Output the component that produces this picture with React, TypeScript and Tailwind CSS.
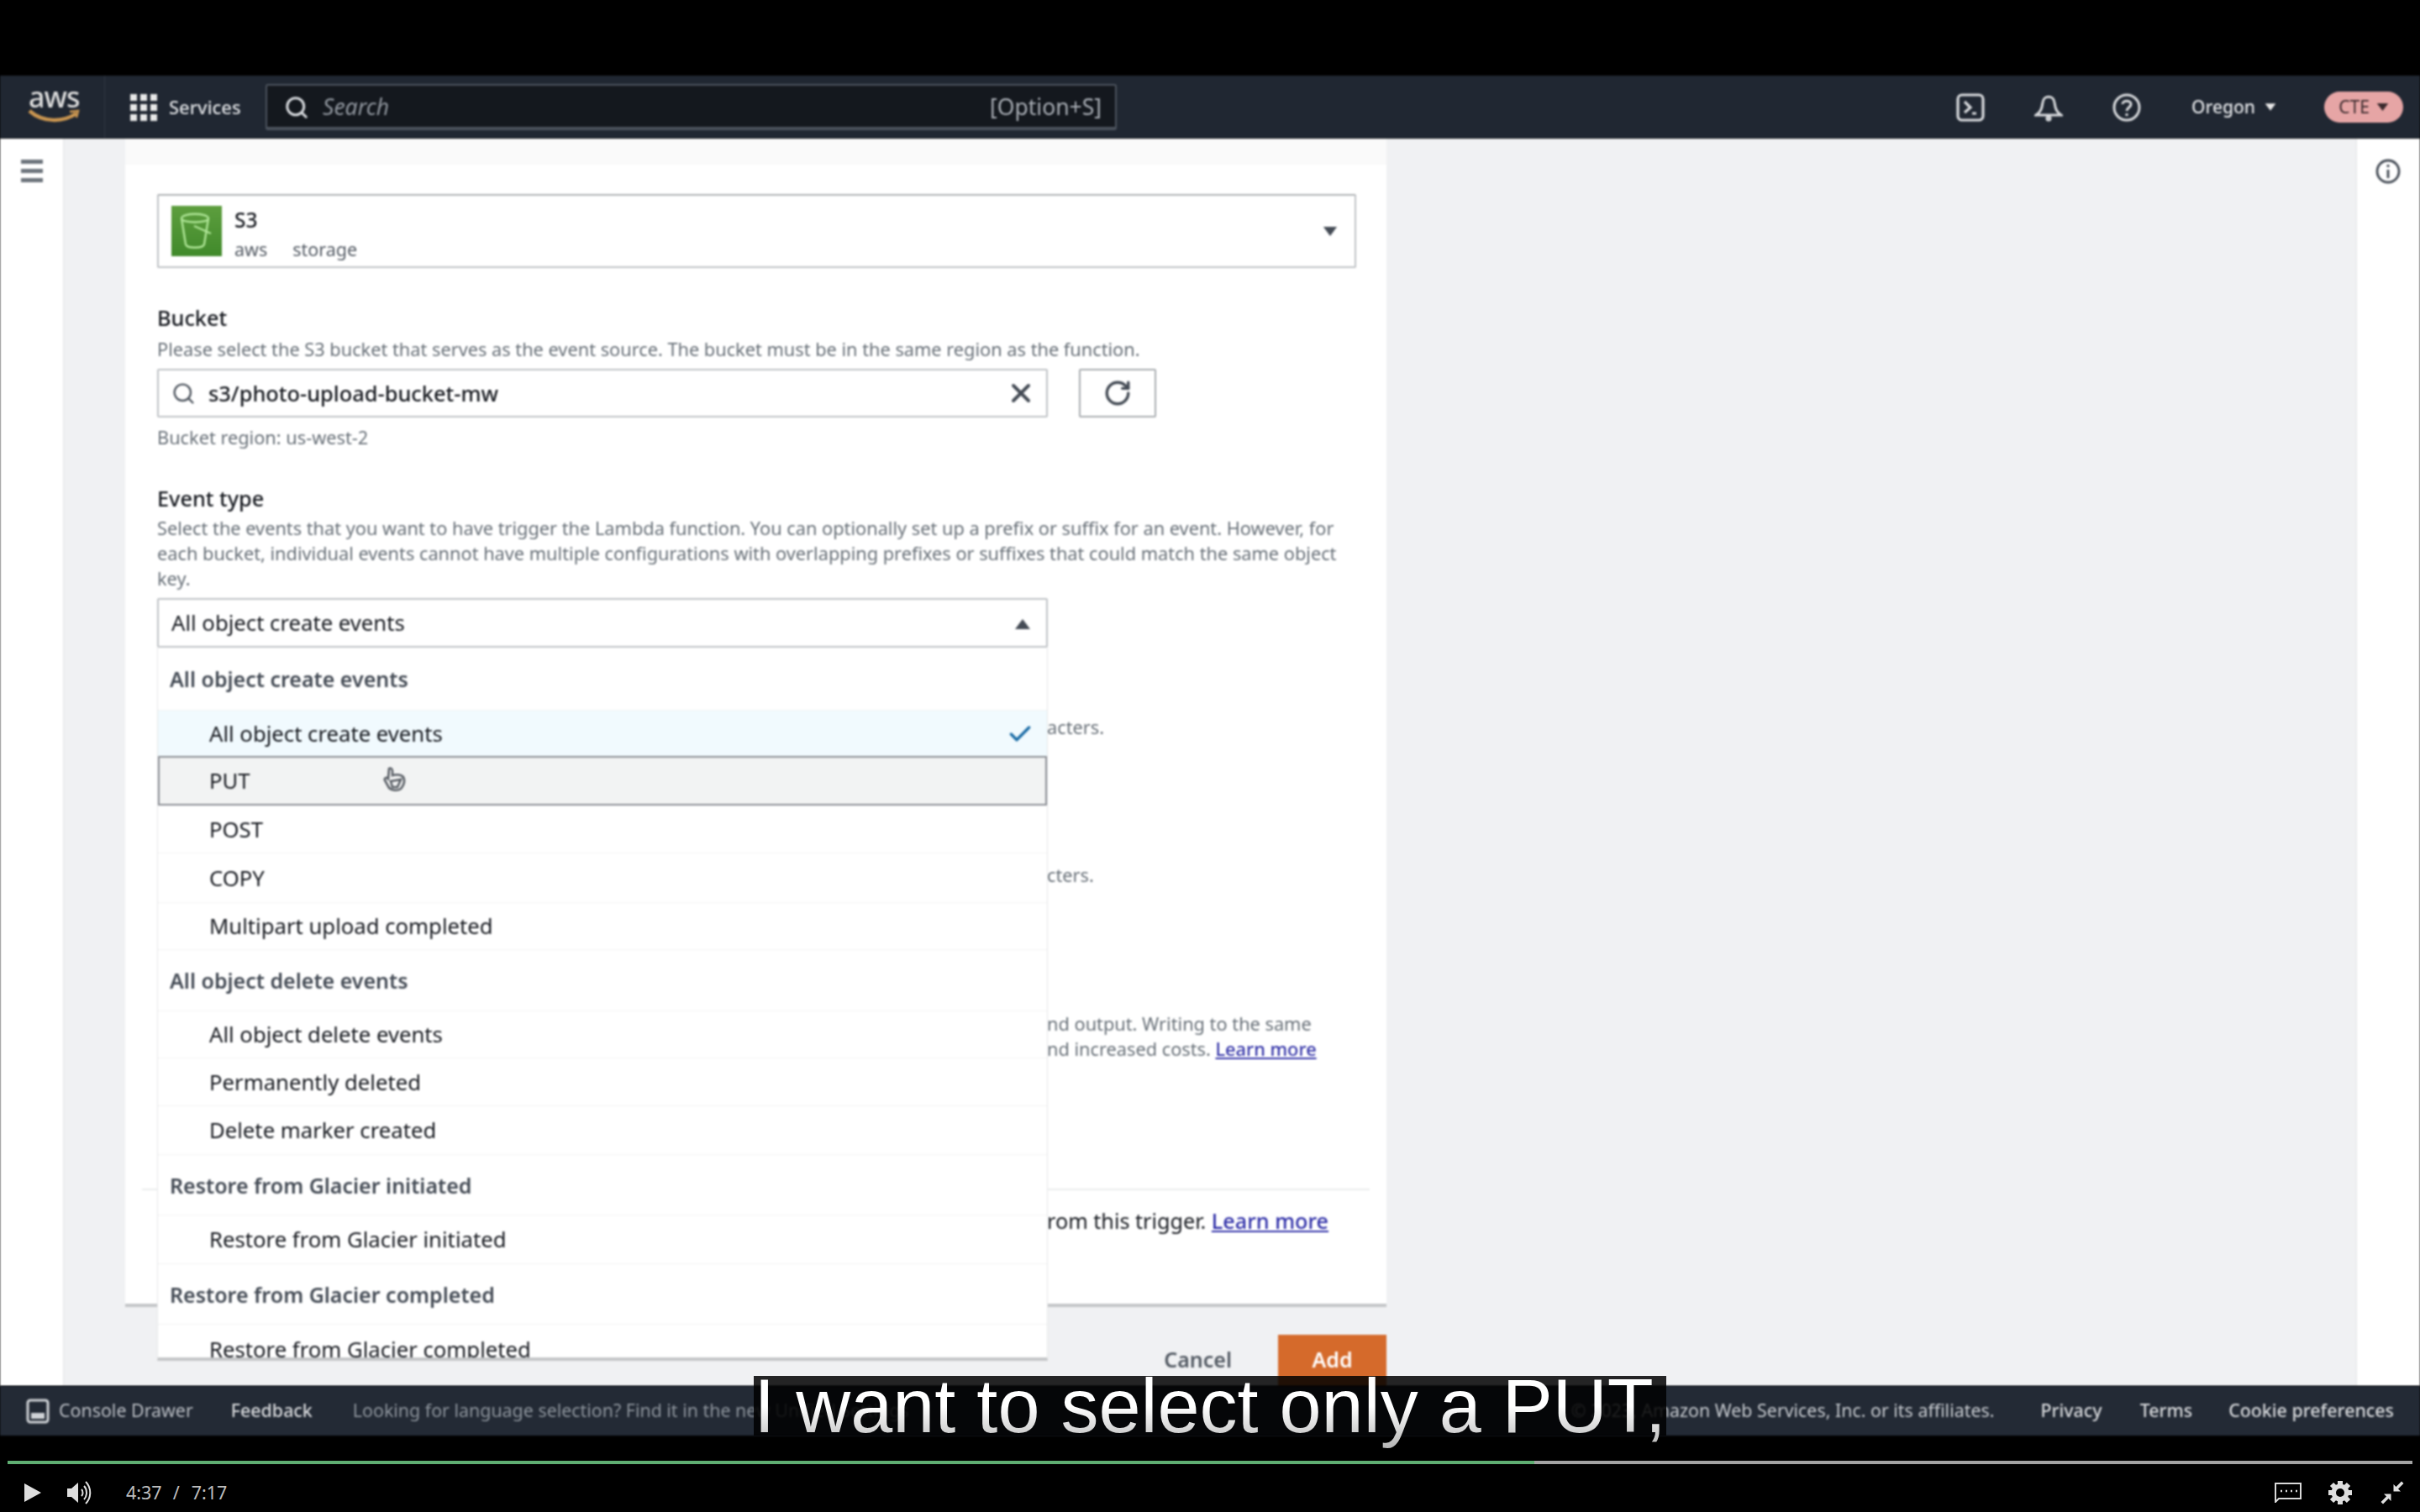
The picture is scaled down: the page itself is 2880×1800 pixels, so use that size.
import React from "react";
import { Search, X, RotateCw, Check } from "lucide-react";

const rows: { t: string; h: number; kind: "group" | "item" | "selected" | "hover" }[] = [
  { t: "All object create events", h: 75, kind: "group" },
  { t: "All object create events", h: 54, kind: "selected" },
  { t: "PUT", h: 59, kind: "hover" },
  { t: "POST", h: 57, kind: "item" },
  { t: "COPY", h: 59, kind: "item" },
  { t: "Multipart upload completed", h: 56, kind: "item" },
  { t: "All object delete events", h: 73, kind: "group" },
  { t: "All object delete events", h: 56, kind: "item" },
  { t: "Permanently deleted", h: 57, kind: "item" },
  { t: "Delete marker created", h: 58, kind: "item" },
  { t: "Restore from Glacier initiated", h: 72, kind: "group" },
  { t: "Restore from Glacier initiated", h: 58, kind: "item" },
  { t: "Restore from Glacier completed", h: 72, kind: "group" },
  { t: "Restore from Glacier completed", h: 60, kind: "item" },
];

function Row({ t, h, kind }: { t: string; h: number; kind: string }) {
  const base = "flex items-center shrink-0 w-full pt-[2px] ";
  const style = { height: h };
  if (kind === "group")
    return (
      <div style={style} className={base + "pl-[14px] font-semibold text-[25px] text-[#444b55] border-b border-[#f2f3f3]"}>
        {t}
      </div>
    );
  if (kind === "selected")
    return (
      <div style={style} className={base + "pl-[61px] pr-[16px] justify-between bg-[#f1fafe] text-[#16191f]"}>
        <span>{t}</span>
        <Check size={32} strokeWidth={2.6} className="text-[#1f6fa8]" />
      </div>
    );
  if (kind === "hover")
    return (
      <div style={style} className={base + "relative pl-[61px] bg-[#f2f3f3] border-2 border-[#8d9096] text-[#16191f]"}>
        <span className="-ml-[2px]">{t}</span>
        <svg width="28" height="30" viewBox="0 0 28 30" fill="none" stroke="#5a5f66" strokeWidth="2.6" className="absolute left-[265px] top-[11px]">
          <path d="M8 2 C10 1, 12 2, 12 5 V10 C16 9, 22 9, 25 12 C27 16, 26 21, 22 26 C18 29, 11 28, 8 25 L3 16 C2 13, 5 12, 7 14 Z" />
          <path d="M10 17 L22 15 L18 24 H12 Z" />
        </svg>
      </div>
    );
  return (
    <div style={style} className={base + "pl-[61px] text-[#16191f] border-b border-[#f2f3f3]"}>
      {t}
    </div>
  );
}

function Caret({ up = false, className = "" }: { up?: boolean; className?: string }) {
  return (
    <svg width="20" height="14" viewBox="0 0 20 14" className={className}>
      <path d={up ? "M10 1 L19 13 L1 13 Z" : "M1 1 L19 1 L10 13 Z"} fill="currentColor" />
    </svg>
  );
}

export default function App() {
  return (
    <div
      className="relative w-[2880px] h-[1800px] bg-black flex flex-col overflow-hidden text-[25.7px]"
      style={{ fontFamily: '"Noto Sans", "Open Sans", sans-serif' }}
    >
      <div className="h-[90px] shrink-0" />

      {/* top nav */}
      <div className="h-[75px] shrink-0 bg-[#202732] flex items-center text-white blur-[0.9px]">
        <div className="w-[125px] pl-[33px] flex flex-col items-start shrink-0 border-r border-[#2f3742] h-full justify-center">
          <span className="text-[34px] leading-[24px] -mt-[6px] pl-[1px] font-medium text-[#dcdcdc] tracking-[-1px]">aws</span>
          <svg width="62" height="18" viewBox="0 0 62 18" className="mt-[2px]">
            <path d="M2 3 C 18 17, 42 17, 58 6" fill="none" stroke="#c99550" strokeWidth="4.5" />
            <path d="M50 4 L60 3 L58 11" fill="none" stroke="#c99550" strokeWidth="2.5" />
          </svg>
        </div>
        <div className="ml-[30px] grid grid-cols-3 gap-[4px] w-[32px] shrink-0">
          {Array.from({ length: 9 }).map((_, i) => (
            <div key={i} className="w-[8px] h-[8px] bg-[#e8e8e8]" />
          ))}
        </div>
        <span className="ml-[14px] text-[22px] font-medium w-[115px] shrink-0 text-[#dfe1e4]">Services</span>
        <div className="w-[1013px] h-[55px] shrink-0 bg-[#14181e] border-2 border-[#4b525c] border-b-4 rounded-[3px] flex items-center pl-[20px] pr-[16px] pt-[2px]">
          <Search size={30} strokeWidth={2.4} className="text-[#d5d8dc]" />
          <span className="ml-[16px] italic text-[26.5px] text-[#8f959d]">Search</span>
          <span className="ml-auto text-[26.5px] text-[#a9aeb5]">[Option+S]</span>
        </div>
        <div className="flex-1" />
        <svg width="34" height="34" viewBox="0 0 34 34" fill="none" stroke="#d8dadd" strokeWidth="3.2" className="shrink-0">
          <rect x="2" y="2" width="30" height="30" rx="5" />
          <path d="M10 10 L17 17 L10 23 M19 24 H24" />
        </svg>
        <svg width="34" height="34" viewBox="0 0 34 34" fill="none" stroke="#d8dadd" strokeWidth="3" className="ml-[59px] shrink-0">
          <path d="M2 26 C8 22, 9 18, 10 11 C11 2, 23 2, 24 11 C25 18, 26 22, 32 26 Z" />
          <circle cx="17" cy="30" r="2" />
        </svg>
        <svg width="34" height="34" viewBox="0 0 34 34" fill="none" stroke="#d8dadd" strokeWidth="3" className="ml-[59px] shrink-0">
          <circle cx="17" cy="17" r="15" />
          <path d="M12 13 C12 8, 22 8, 22 13 C22 17, 17 17, 17 21 M17 24 V27" />
        </svg>
        <span className="ml-[60px] text-[21px] font-medium text-[#dfe1e4]">Oregon</span>
        <Caret className="ml-[11px] w-[14px] h-[11px] text-[#e8e8e8]" />
        <div className="ml-[57px] mr-[20px] w-[94px] h-[37px] rounded-full bg-[#e6a5a5] flex items-center justify-center gap-[8px] text-[#3b2a2d] text-[21px]">
          <span>CTE</span>
          <Caret className="w-[15px] h-[11px]" />
        </div>
      </div>

      {/* middle */}
      <div className="h-[1485px] shrink-0 flex bg-[#f0f1f3] text-[#16191f] blur-[0.9px]">
        <div className="w-[76px] shrink-0 bg-white border-r border-[#e3e5e6] pl-[25px] pt-[25px]">
          <div className="flex flex-col gap-[6px] w-[26px]">
            <div className="h-[5px] bg-[#6d747c]" />
            <div className="h-[5px] bg-[#6d747c]" />
            <div className="h-[5px] bg-[#6d747c]" />
          </div>
        </div>

        <div className="flex-1 pl-[73px]">
          <div className="relative w-[1501px] h-[1391px] bg-white border-b-4 border-[#c4c6c8]">
            <div className="h-[31px] bg-[#fafafa]" />

            <div className="ml-[38px] mr-[36px]">
              {/* S3 select */}
              <div className="mt-[35px] h-[88px] border-2 border-t-[#b0b3b6] border-[#c0c3c6] rounded-[2px] flex items-center pl-[15px] pr-[20px]">
                <div className="w-[60px] h-[60px] bg-gradient-to-b from-[#5d9e3e] to-[#408a2b] flex items-center justify-center shrink-0">
                  <svg width="40" height="44" viewBox="0 0 40 44" fill="none" stroke="#aee596" strokeWidth="2.4">
                    <path d="M2 7 C2 0, 34 0, 34 7 C34 13, 2 13, 2 7 Z" />
                    <path d="M2 7 L7 38 C9 43, 27 43, 29 38 L34 7" />
                    <path d="M17 16 L37 25" />
                  </svg>
                </div>
                <div className="ml-[15px] flex flex-col pt-[6px]">
                  <span className="text-[24.5px] leading-[34px] font-medium">S3</span>
                  <div className="mt-[3px] flex gap-[30px] text-[21.5px] leading-[30px] text-[#545b64]">
                    <span>aws</span>
                    <span>storage</span>
                  </div>
                </div>
                <Caret className="ml-auto w-[18px] h-[13px] text-[#444b55]" />
              </div>

              {/* Bucket */}
              <div className="mt-[44px] leading-[30px] font-medium text-[25.3px]">Bucket</div>
              <div className="mt-[8px] leading-[30px] text-[21.75px] text-[#687078]">
                Please select the S3 bucket that serves as the event source. The bucket must be in the same region as the function.
              </div>
              <div className="mt-[8px] flex h-[58px]">
                <div className="w-[1060px] border-2 border-[#c0c3c6] rounded-[2px] flex items-center pl-[15px] pr-[12px]">
                  <Search size={29} strokeWidth={2} className="text-[#545b64]" />
                  <span className="ml-[15px] font-medium text-[25.4px]">s3/photo-upload-bucket-mw</span>
                  <X size={36} strokeWidth={2.6} className="ml-auto text-[#444b55]" />
                </div>
                <div className="ml-[37px] w-[92px] border-2 border-[#a9adb1] rounded-[2px] flex items-center justify-center">
                  <RotateCw size={34} strokeWidth={2.4} className="text-[#444b55]" />
                </div>
              </div>
              <div className="mt-[9px] leading-[30px] text-[21.75px] text-[#687078]">Bucket region: us-west-2</div>

              {/* Event type */}
              <div className="mt-[42px] leading-[30px] font-medium text-[25.3px]">Event type</div>
              <div className="mt-[6px] leading-[30px] text-[21.75px] text-[#687078] w-[1426px]">
                Select the events that you want to have trigger the Lambda function. You can optionally set up a prefix or suffix for an event. However, for each bucket, individual events cannot have multiple configurations with overlapping prefixes or suffixes that could match the same object key.
              </div>
              <div className="mt-[8px] w-[1060px] h-[59px] border-2 border-[#c0c3c6] rounded-[2px] flex items-center pl-[15px] pr-[18px] pt-[2px]">
                <span>All object create events</span>
                <Caret up className="ml-auto w-[20px] h-[14px] text-[#444b55]" />
              </div>
            </div>

            {/* page text beside the menu */}
            <div className="pl-[1097px] text-[21.75px] leading-[30px] text-[#687078]">
              <div className="mt-[80px]">acters.</div>
              <div className="mt-[146px]">cters.</div>
              <div className="mt-[147px]">nd output. Writing to the same</div>
              <div>
                nd increased costs. <a className="text-[#3434a8] underline font-medium">Learn more</a>
              </div>
            </div>
            <div className="mt-[151px] mx-[20px] h-[2px] bg-[#eaeded]" />
            <div className="mt-[21px] pl-[1097px] text-[25.2px] leading-[30px] text-[#16191f]">
              rom this trigger. <a className="text-[#2f2fa8] underline font-medium">Learn more</a>
            </div>

            {/* open menu */}
            <div className="absolute left-[38px] top-[606px] w-[1060px] h-[849px] bg-white border-x border-[#e6e8e9] border-b-4 border-b-[#c4c6c8] overflow-hidden flex flex-col">
              {rows.map((r, i) => (
                <Row key={i} {...r} />
              ))}
            </div>
          </div>

          <div className="w-[1501px] h-[94px] flex items-end justify-end">
            <span className="mr-[55px] mb-[13px] font-semibold text-[25px] text-[#545b64]">Cancel</span>
            <div className="w-[129px] h-[61px] bg-[#d56a2b] flex items-center justify-center pb-[2px] text-white font-semibold text-[25px]">
              Add
            </div>
          </div>
        </div>

        <div className="w-[76px] shrink-0 bg-white border-l border-[#e3e5e6] pl-[21px] pt-[23px]">
          <svg width="32" height="32" viewBox="0 0 32 32" fill="none" stroke="#444b55" strokeWidth="2.8">
            <circle cx="16" cy="16" r="13" />
            <path d="M16 14 V24 M16 8 V11" />
          </svg>
        </div>
      </div>

      {/* console footer */}
      <div className="h-[59px] shrink-0 bg-[#232a35] flex items-center text-[21.4px] text-[#d8dadd] whitespace-nowrap blur-[0.9px]">
        <svg width="28" height="30" viewBox="0 0 28 30" fill="none" className="ml-[31px] shrink-0">
          <rect x="2" y="2" width="24" height="26" rx="3" stroke="#cfd2d6" strokeWidth="3" />
          <rect x="6" y="17" width="16" height="7" fill="#cfd2d6" />
        </svg>
        <span className="ml-[11px] text-[#b9bdc3]">Console Drawer</span>
        <span className="ml-[45px] font-medium">Feedback</span>
        <span className="ml-[48px] text-[#8d949c]">Looking for language selection? Find it in the new Unified Settings</span>
        <div className="flex-1" />
        <span className="text-[#c6cacf]">© 2023, Amazon Web Services, Inc. or its affiliates.</span>
        <span className="ml-[55px] font-medium">Privacy</span>
        <span className="ml-[45px] font-medium">Terms</span>
        <span className="ml-[43px] mr-[31px] font-medium">Cookie preferences</span>
      </div>

      {/* player */}
      <div className="flex-1 flex flex-col">
        <div className="mt-[30px] mx-[9px] h-[4px] flex">
          <div className="w-[1817px] bg-[#5fae72]" />
          <div className="flex-1 bg-[#a3a3a3]" />
        </div>
        <div className="mt-[14px] flex items-center h-[40px] text-[21.5px] text-[#bdbdbd]">
          <svg width="20" height="22" viewBox="0 0 20 22" fill="#dedede" className="ml-[29px] shrink-0">
            <path d="M0 0 L20 11 L0 22 Z" />
          </svg>
          <svg width="30" height="28" viewBox="0 0 30 28" fill="none" className="ml-[31px] shrink-0">
            <path d="M0 9 H5 L13 2 V26 L5 19 H0 Z" fill="#dedede" />
            <path d="M17 10 C19 12, 19 16, 17 18" stroke="#dedede" strokeWidth="2" />
            <path d="M20 6 C24 10, 24 18, 20 22" stroke="#dedede" strokeWidth="2" />
            <path d="M22 1 C29 8, 29 20, 22 27" stroke="#dedede" strokeWidth="2" />
          </svg>
          <span className="ml-[40px]">4:37</span>
          <span className="ml-[13px]">/</span>
          <span className="ml-[14px]">7:17</span>
          <div className="flex-1" />
          <svg width="32" height="24" viewBox="0 0 32 24" fill="none" stroke="#d8d8d8" strokeWidth="2" className="shrink-0">
            <path d="M1 1 H31 V19 H5 L1 23 Z" />
            <path d="M7 10 H9 M13 10 H15 M19 10 H21 M25 10 H27" strokeWidth="2.4" />
          </svg>
          <svg width="28" height="28" viewBox="0 0 28 28" className="ml-[32px] shrink-0">
            <g stroke="#dedede" strokeWidth="6">
              <path d="M14 0 V28 M0 14 H28 M4 4 L24 24 M24 4 L4 24" />
            </g>
            <circle cx="14" cy="14" r="10.5" fill="#dedede" />
            <circle cx="14" cy="14" r="5" fill="#000" />
          </svg>
          <svg width="28" height="28" viewBox="0 0 28 28" fill="#dedede" className="ml-[34px] mr-[19px] shrink-0">
            <path d="M15.5 12.5 V4 L18.5 7 L25 0.5 L27.5 3 L21 9.5 L24 12.5 Z" />
            <path d="M12.5 15.5 V24 L9.5 21 L3 27.5 L0.5 25 L7 18.5 L4 15.5 Z" />
          </svg>
        </div>
      </div>

      {/* caption */}
      <div className="absolute left-[897px] top-[1638px] w-[1086px] h-[71px] bg-black/85 text-center whitespace-nowrap overflow-visible leading-[73px]">
        <span
          className="text-[90px] bg-gradient-to-b from-white via-white to-[#b5b5b5] bg-clip-text text-transparent"
          style={{ fontFamily: '"Liberation Sans", Arial, sans-serif' }}
        >
          I want to select only a PUT,
        </span>
      </div>
    </div>
  );
}
